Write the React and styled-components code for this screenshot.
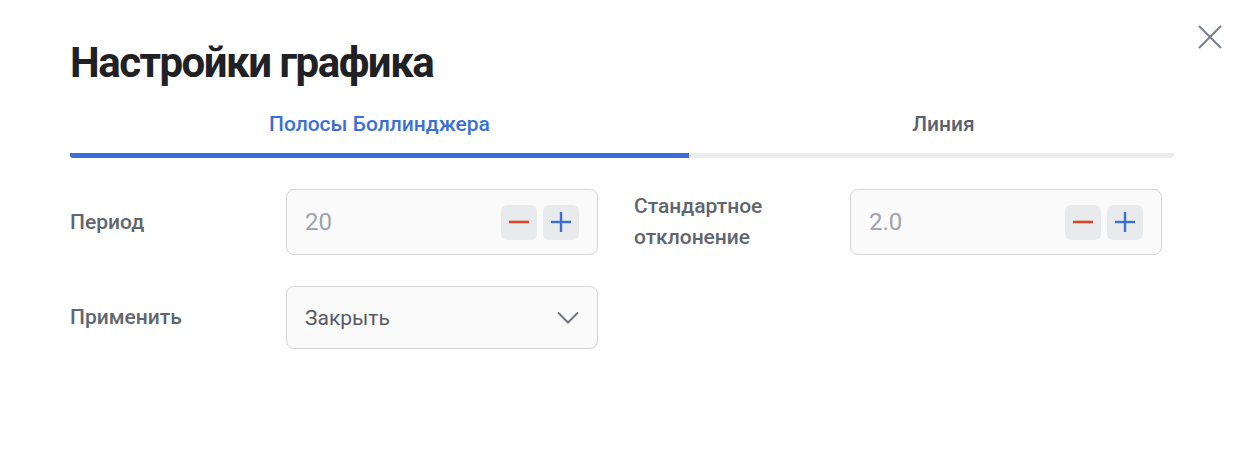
import React from 'react'
import styled, { createGlobalStyle } from 'styled-components'

const GlobalStyle = createGlobalStyle`
  html, body {
    margin: 0;
    padding: 0;
    background: #ffffff;
    font-family: Roboto, "Noto Sans", sans-serif;
  }
`

const Modal = styled.div`
  position: relative;
  width: 1246px;
  height: 464px;
  box-sizing: border-box;
  padding: 39px 72px 0 70px;
  background: #fff;
`

const CloseButton = styled.button`
  position: absolute;
  top: 22px;
  right: 21px;
  width: 30px;
  height: 30px;
  padding: 0;
  border: none;
  background: none;
  display: flex;
  align-items: center;
  justify-content: center;
  cursor: pointer;
`

const Title = styled.h1`
  margin: 0;
  font-size: 42px;
  line-height: 48px;
  font-weight: 700;
  color: #1f2125;
  letter-spacing: -1.5px;
`

const Tabs = styled.div`
  display: flex;
  margin-top: 25px;
`

const Tab = styled.button`
  flex: ${p => (p.$active ? '0 0 619px' : '1')};
  border: none;
  background: none;
  padding: 0 0 17px ${p => (p.$active ? '0' : '24px')};
  font-family: inherit;
  font-size: 21px;
  line-height: 24px;
  font-weight: 500;
  color: ${p => (p.$active ? '#3c6fd6' : '#5b616b')};
  border-bottom: 5px solid ${p => (p.$active ? '#3c6fd6' : '#ebecee')};
  border-radius: ${p => (p.$active ? '3px 0 0 3px' : '0 3px 3px 0')};
  cursor: pointer;
`

const Form = styled.div`
  display: grid;
  grid-template-columns: 216px 312px 252px 312px;
  row-gap: 31px;
  margin-top: 31px;
  align-items: center;
`

const Label = styled.div`
  font-size: 21px;
  line-height: 31px;
  font-weight: 500;
  color: #60666f;
  padding-left: ${p => (p.$second ? '36px' : '0')};
`

const Field = styled.div`
  display: flex;
  align-items: center;
  justify-content: space-between;
  box-sizing: border-box;
  height: ${p => p.$height || 66}px;
  padding: 0 18px 0 18px;
  background: #fafafa;
  border: 1px solid #d3d5d8;
  border-radius: 8px;
  font-size: ${p => (p.$muted ? '24px' : '21px')};
  color: ${p => (p.$muted ? '#9ea3ab' : '#555b66')};
`

const Steppers = styled.div`
  display: flex;
  gap: 6px;
`

const StepButton = styled.button`
  width: 36px;
  height: 35px;
  padding: 0;
  border: none;
  border-radius: 6px;
  background: #e9eaec;
  display: flex;
  align-items: center;
  justify-content: center;
  cursor: pointer;
`

const Minus = () => (
  <svg width="20" height="20" viewBox="0 0 20 20">
    <line x1="0" y1="10" x2="20" y2="10" stroke="#d4482c" strokeWidth="2.6" />
  </svg>
)

const Plus = () => (
  <svg width="20" height="20" viewBox="0 0 20 20">
    <line x1="0" y1="10" x2="20" y2="10" stroke="#3c6fd6" strokeWidth="2.4" />
    <line x1="10" y1="0" x2="10" y2="20" stroke="#3c6fd6" strokeWidth="2.4" />
  </svg>
)

const Chevron = () => (
  <svg width="22" height="14" viewBox="0 0 22 14">
    <polyline points="1,1.5 11,11.5 21,1.5" fill="none" stroke="#6f747d" strokeWidth="2" />
  </svg>
)

const Stepper = ({ value }) => (
  <Field $muted>
    <span>{value}</span>
    <Steppers>
      <StepButton aria-label="minus"><Minus /></StepButton>
      <StepButton aria-label="plus"><Plus /></StepButton>
    </Steppers>
  </Field>
)

const App = () => (
  <>
    <GlobalStyle />
    <Modal>
      <CloseButton aria-label="close">
        <svg width="26" height="26" viewBox="0 0 26 26">
          <path d="M2 2 L24 24 M24 2 L2 24" stroke="#7a808a" strokeWidth="2" />
        </svg>
      </CloseButton>
      <Title>Настройки графика</Title>
      <Tabs>
        <Tab $active>Полосы Боллинджера</Tab>
        <Tab>Линия</Tab>
      </Tabs>
      <Form>
        <Label>Период</Label>
        <Stepper value="20" />
        <Label $second>Стандартное<br />отклонение</Label>
        <Stepper value="2.0" />
        <Label>Применить</Label>
        <Field $height={63}>
          <span>Закрыть</span>
          <Chevron />
        </Field>
      </Form>
    </Modal>
  </>
)

export default App
